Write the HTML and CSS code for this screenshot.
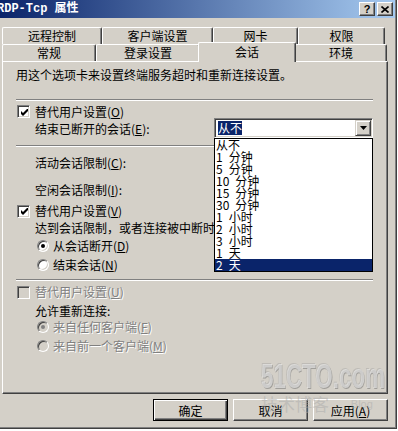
FILE: index.html
```html
<!DOCTYPE html>
<html lang="zh-CN">
<head>
    <meta charset="UTF-8">
    <title>RDP-Tcp 属性</title>
    <link rel="stylesheet" href="styles.css">
</head>
<body>
    <div class="window">
        <!-- Title bar -->
        <div class="titlebar">
            <span class="title">RDP-Tcp 属性</span>
            <div class="caps">
                <span class="cap help">?</span>
                <span class="cap close">
                    <svg width="8" height="7" viewBox="0 0 8 7"><path d="M0.5 0.5 L7.5 6.5 M7.5 0.5 L0.5 6.5" stroke="#000" stroke-width="1.6"/></svg>
                </span>
            </div>
        </div>

        <!-- Tabs -->
        <div class="tabs">
            <div class="tab-row back">
                <div class="tab">远程控制</div>
                <div class="tab">客户端设置</div>
                <div class="tab">网卡</div>
                <div class="tab">权限</div>
            </div>
            <div class="tab-row front">
                <div class="tab">常规</div>
                <div class="tab">登录设置</div>
                <div class="tab active">会话</div>
                <div class="tab">环境</div>
            </div>
        </div>

        <!-- Session page -->
        <div class="panel">
            <div class="intro">用这个选项卡来设置终端服务超时和重新连接设置。</div>
            <div class="sep mt17"></div>

            <div class="check-row mt4 short">
                <span class="box"><svg width="7" height="7" viewBox="0 0 7 7"><polygon points="0,2 2,4 6,0 7,0 7,2 2,7 0,5" fill="#000"/></svg></span>
                <span>替代用户设置(<u>O</u>)</span>
            </div>
            <div class="field-row">
                <span class="label">结束已断开的会话(<u>E</u>):</span>
                <div class="combo">
                    <span class="combo-value"><span class="sel">从不</span></span>
                    <span class="combo-btn"><svg width="7" height="4" viewBox="0 0 7 4"><polygon points="0,0 7,0 3.5,4" fill="#000"/></svg></span>
                    <ul class="combo-list">
                        <li>从不</li>
                        <li>1&ensp;分钟</li>
                        <li>5&ensp;分钟</li>
                        <li>10&ensp;分钟</li>
                        <li>15&ensp;分钟</li>
                        <li>30&ensp;分钟</li>
                        <li>1&ensp;小时</li>
                        <li>2&ensp;小时</li>
                        <li>3&ensp;小时</li>
                        <li>1&ensp;天</li>
                        <li class="current">2&ensp;天</li>
                    </ul>
                </div>
            </div>
            <div class="sep mt7"></div>

            <div class="field-row mt5">
                <span class="label">活动会话限制(<u>C</u>):</span>
                <div class="combo"><span class="combo-value"></span><span class="combo-btn"></span></div>
            </div>
            <div class="field-row mt7">
                <span class="label">空闲会话限制(<u>I</u>):</span>
                <div class="combo"><span class="combo-value"></span><span class="combo-btn"></span></div>
            </div>
            <div class="check-row mt5">
                <span class="box"><svg width="7" height="7" viewBox="0 0 7 7"><polygon points="0,2 2,4 6,0 7,0 7,2 2,7 0,5" fill="#000"/></svg></span>
                <span>替代用户设置(<u>V</u>)</span>
            </div>
            <div class="text-row mt3">达到会话限制，或者连接被中断时</div>
            <div class="radio-row mt4">
                <span class="radio on"></span>
                <span>从会话断开(<u>D</u>)</span>
            </div>
            <div class="radio-row mt5">
                <span class="radio"></span>
                <span>结束会话(<u>N</u>)</span>
            </div>
            <div class="sep mt7"></div>

            <div class="check-row mt4 disabled">
                <span class="box"></span>
                <span>替代用户设置(<u>U</u>)</span>
            </div>
            <div class="text-row mt5">允许重新连接:</div>
            <div class="radio-row mt2 disabled">
                <span class="radio on"></span>
                <span>来自任何客户端(<u>F</u>)</span>
            </div>
            <div class="radio-row mt5 disabled">
                <span class="radio"></span>
                <span>来自前一个客户端(<u>M</u>)</span>
            </div>
        </div>

        <!-- Dialog buttons -->
        <div class="actions">
            <button class="btn default">确定</button>
            <button class="btn">取消</button>
            <button class="btn">应用(<u>A</u>)</button>
        </div>

        <!-- Site watermark over the screenshot -->
        <div class="watermark">
            <div class="wm-logo">51CTO.com</div>
            <div class="wm-sub">技术博客 <span>Blog</span></div>
        </div>
    </div>
</body>
</html>
```

FILE: styles.css
```css
:root {
    --face: #d4d0c8;
    --shadow: #808080;
    --dark: #404040;
    --select: #0a246a;
}

* {
    margin: 0;
    padding: 0;
    box-sizing: border-box;
}

body {
    background: #fff;
    font-family: "Noto Sans CJK SC", sans-serif;
    font-size: 12px;
    color: #000;
}

.window {
    position: relative;
    width: 397px;
    height: 429px;
    background: var(--face);
    border-right: 1px solid var(--dark);
    border-bottom: 1px solid var(--dark);
    box-shadow: inset -1px -1px var(--shadow);
    overflow: hidden;
}

/* title bar */
.titlebar {
    height: 18px;
    margin-right: 1px;
    background: linear-gradient(to right, #0a246a, #a6caf0);
    display: flex;
    align-items: center;
    justify-content: space-between;
}

.title {
    margin-left: -3px;
    color: #fff;
    font-family: "Liberation Mono", "Noto Sans CJK SC", monospace;
    font-weight: bold;
    font-size: 12px;
    line-height: 18px;
}

.caps {
    display: flex;
    gap: 2px;
    margin-right: 2px;
}

.cap {
    width: 16px;
    height: 14px;
    background: var(--face);
    border: 1px solid;
    border-color: #fff var(--dark) var(--dark) #fff;
    box-shadow: inset -1px -1px var(--shadow);
    display: flex;
    align-items: center;
    justify-content: center;
}

.cap.help {
    font-family: "Liberation Sans", sans-serif;
    font-weight: bold;
    font-size: 11px;
    line-height: 12px;
}

/* tabs */
.tabs {
    margin-top: 9px;
    padding-left: 2px;
}

.tab-row {
    display: grid;
    height: 17px;
}

.tab-row.back { grid-template-columns: 100px 111px 85px 87px; }
.tab-row.front { grid-template-columns: 94px 104px 95px 92px; }

.tab {
    background: var(--face);
    border-top: 1px solid #fff;
    border-left: 1px solid #fff;
    border-right: 1px solid var(--dark);
    box-shadow: inset -1px 0 var(--shadow);
    border-radius: 2px 2px 0 0;
    text-align: center;
    line-height: 15px;
}

.tab.active {
    position: relative;
    z-index: 1;
    margin: -2px -1px -1px -2px;
    line-height: 17px;
}

/* page */
.panel {
    width: 386px;
    height: 333px;
    margin-left: 2px;
    border: 1px solid;
    border-color: #fff var(--dark) var(--dark) #fff;
    box-shadow: inset -1px -1px var(--shadow);
    padding: 0 14px 0 13px;
}

.intro {
    margin-top: 6px;
    height: 14px;
    line-height: 14px;
}

.sep {
    border-top: 1px solid var(--shadow);
    border-bottom: 1px solid #fff;
}

.mt2 { margin-top: 2px; }
.mt3 { margin-top: 3px; }
.mt4 { margin-top: 4px; }
.mt5 { margin-top: 5px; }
.mt7 { margin-top: 7px; }
.mt17 { margin-top: 17px; }

.check-row, .radio-row, .text-row {
    height: 14px;
    line-height: 14px;
    display: flex;
    align-items: center;
}

.check-row.short { height: 13px; }

.check-row { padding-left: 1px; gap: 5px; }
.radio-row { padding-left: 21px; gap: 4px; }
.text-row { padding-left: 19px; }

.field-row {
    height: 20px;
    display: flex;
    align-items: center;
    padding-left: 19px;
}

.disabled {
    color: var(--shadow);
    text-shadow: 1px 1px 0 #fff;
}

.box {
    width: 13px;
    height: 13px;
    flex: none;
    border: 1px solid;
    border-color: var(--shadow) #fff #fff var(--shadow);
    box-shadow: inset 1px 1px var(--dark), inset -1px -1px var(--face);
    background: #fff;
    display: flex;
    align-items: center;
    justify-content: center;
}

.box svg { margin: 1px 0 0 1px; }

.disabled .box { background: var(--face); }

.radio {
    width: 12px;
    height: 12px;
    flex: none;
    border-radius: 50%;
    border: 1px solid;
    border-color: var(--shadow) #fff #fff var(--shadow);
    box-shadow: inset 1px 1px var(--dark), inset -1px -1px var(--face);
    background: #fff;
    display: flex;
    align-items: center;
    justify-content: center;
}

.radio.on::after {
    content: "";
    width: 4px;
    height: 4px;
    border-radius: 50%;
    background: #000;
}

.disabled .radio { background: var(--face); }
.disabled .radio.on::after { background: var(--shadow); }

/* combo box */
.combo {
    position: relative;
    margin-left: auto;
    width: 159px;
    height: 20px;
    border: 1px solid;
    border-color: var(--shadow) #fff #fff var(--shadow);
    box-shadow: inset 1px 1px var(--dark), inset -1px -1px var(--face);
    background: #fff;
    padding: 1px;
    display: flex;
    align-items: center;
}

.combo-value {
    flex: 1;
    padding-left: 2px;
    line-height: 14px;
}

.combo-value .sel {
    display: inline-block;
    background: var(--select);
    color: #fff;
}

.combo-btn {
    width: 16px;
    height: 16px;
    background: var(--face);
    border: 1px solid;
    border-color: var(--face) var(--dark) var(--dark) var(--face);
    box-shadow: inset 1px 1px #fff, inset -1px -1px var(--shadow);
    display: flex;
    align-items: center;
    justify-content: center;
}

.combo-list {
    position: absolute;
    top: 19px;
    left: -1px;
    width: 159px;
    z-index: 5;
    list-style: none;
    background: #fff;
    border: 1px solid #000;
}

.combo-list li {
    height: 12px;
    line-height: 12px;
    padding-left: 1px;
}

.combo-list li.current {
    background: var(--select);
    color: #fff;
}

/* dialog buttons */
.actions {
    display: flex;
    justify-content: flex-end;
    gap: 5px;
    margin-top: 5px;
    padding-right: 8px;
}

.btn {
    width: 75px;
    height: 22px;
    font-family: inherit;
    font-size: 12px;
    color: #000;
    background: var(--face);
    border: 1px solid;
    border-color: #fff var(--dark) var(--dark) #fff;
    box-shadow: inset -1px -1px var(--shadow);
}

.btn.default {
    border-color: #000;
    box-shadow: inset 1px 1px #fff, inset -1px -1px var(--dark), inset -2px -2px var(--shadow);
}

/* watermark */
.watermark {
    position: absolute;
    left: 261px;
    top: 358px;
    pointer-events: none;
}

.wm-logo {
    font-family: "Liberation Sans", sans-serif;
    font-weight: bold;
    font-size: 35px;
    line-height: 36px;
    transform: scaleX(0.64);
    transform-origin: left;
    white-space: nowrap;
    color: rgba(240, 240, 240, 0.6);
    text-shadow: 1px 1px 0 rgba(110, 110, 110, 0.5), -1px -1px 0 rgba(150, 150, 150, 0.35);
}

.wm-sub {
    font-size: 17px;
    line-height: 20px;
    white-space: nowrap;
    color: rgba(170, 170, 170, 0.5);
}

.wm-sub span {
    font-family: "Liberation Sans", sans-serif;
    font-size: 11px;
    margin-left: 18px;
    vertical-align: top;
}
```
